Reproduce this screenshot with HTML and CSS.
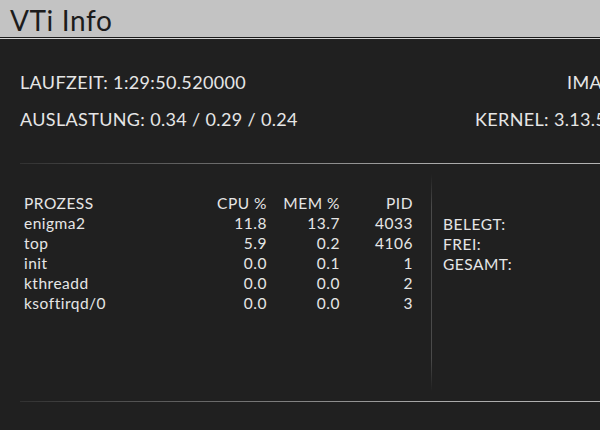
FILE: index.html
```html
<!DOCTYPE html>
<html lang="de">
<head>
<meta charset="utf-8">
<title>VTi Info</title>
<link rel="stylesheet" href="styles.css">
</head>
<body>
<div class="screen">
  <header class="titlebar">VTi Info</header>
  <div class="titleline"></div>
  <section class="info">
    <div class="info-left">
      <div class="line">LAUFZEIT: 1:29:50.520000</div>
      <div class="line">AUSLASTUNG: 0.34 / 0.29 / 0.24</div>
    </div>
    <div class="info-right">
      <div class="line img">IMAGE: VTi</div>
      <div class="line kern">KERNEL: 3.13.5</div>
    </div>
  </section>
  <div class="sep"></div>
  <section class="lower">
    <div class="procs">
      <div class="prow head"><span class="name">PROZESS</span><span class="num c-cpu">CPU %</span><span class="num c-mem">MEM %</span><span class="num c-pid">PID</span></div>
      <div class="prow"><span class="name">enigma2</span><span class="num c-cpu">11.8</span><span class="num c-mem">13.7</span><span class="num c-pid">4033</span></div>
      <div class="prow"><span class="name">top</span><span class="num c-cpu">5.9</span><span class="num c-mem">0.2</span><span class="num c-pid">4106</span></div>
      <div class="prow"><span class="name">init</span><span class="num c-cpu">0.0</span><span class="num c-mem">0.1</span><span class="num c-pid">1</span></div>
      <div class="prow"><span class="name">kthreadd</span><span class="num c-cpu">0.0</span><span class="num c-mem">0.0</span><span class="num c-pid">2</span></div>
      <div class="prow"><span class="name">ksoftirqd/0</span><span class="num c-cpu">0.0</span><span class="num c-mem">0.0</span><span class="num c-pid">3</span></div>
    </div>
    <div class="vdiv"></div>
    <div class="memory">
      <div class="mrow">BELEGT:</div>
      <div class="mrow">FREI:</div>
      <div class="mrow">GESAMT:</div>
    </div>
  </section>
  <div class="sep bottom"></div>
</div>
</body>
</html>
```
FILE: styles.css
```css
html, body {
  margin: 0;
  padding: 0;
  background: #202020;
}
body {
  width: 600px;
  height: 430px;
  overflow: hidden;
  font-family: Lato, "Open Sans", sans-serif;
  color: #e6e6e6;
}
.screen {
  display: flex;
  flex-direction: column;
  width: 600px;
  height: 430px;
  overflow: hidden;
}
.titlebar {
  height: 37px;
  background: #c3c3c3;
  color: #1c1c1c;
  font-size: 28px;
  letter-spacing: 0.6px;
  line-height: 40px;
  padding-left: 10px;
  border-bottom: 1px solid #1a1a1a;
  box-sizing: content-box;
}
.titleline {
  height: 1px;
  background: #d4d4d4;
}
.info {
  display: flex;
  justify-content: space-between;
  padding: 32px 0 0 20px;
  height: 92px;
  font-size: 18px;
  letter-spacing: 0.35px;
}
.info .line {
  height: 37px;
  line-height: 22px;
  white-space: nowrap;
}
.info-right {
  display: flex;
  flex-direction: column;
  width: 125px;
  overflow: hidden;
}
.info-right .img { padding-left: 92px; }
.info-right .kern { padding-left: 0; }
.sep {
  height: 1px;
  margin-left: 20px;
  background: linear-gradient(to right, rgba(200,200,200,0.1), #a8a8a8 70%, #b4b4b4);
}
.lower {
  display: flex;
  height: 227px;
  padding-top: 10px;
  box-sizing: border-box;
  margin-bottom: 10px;
}
.procs {
  width: 431px;
  padding: 19px 0 0 24px;
  box-sizing: border-box;
  font-size: 15.5px;
  letter-spacing: 0.5px;
}
.prow {
  display: flex;
  height: 20px;
  line-height: 20px;
}
.prow .name { width: 183px; }
.prow .num { text-align: right; }
.prow .c-cpu { width: 60px; }
.prow .c-mem { width: 73px; }
.prow .c-pid { width: 73px; }
.vdiv {
  width: 1px;
  background: linear-gradient(to bottom, rgba(80,80,80,0), #4a4a4a 15%, #4a4a4a 85%, rgba(80,80,80,0));
}
.memory {
  padding: 40px 0 0 11px;
  font-size: 15.5px;
  letter-spacing: 0.5px;
}
.mrow {
  height: 20px;
  line-height: 20px;
}
```
